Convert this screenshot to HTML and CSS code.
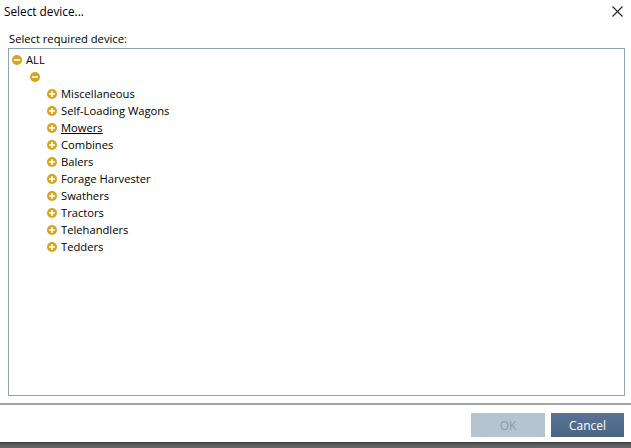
FILE: index.html
```html
<!DOCTYPE html>
<html>
<head>
<meta charset="utf-8">
<link rel="stylesheet" href="styles.css">
</head>
<body>
<div class="dialog">
  <div class="titlebar">
    <span class="title">Select device...</span>
    <svg class="close" width="11" height="11" viewBox="0 0 11 11"><path d="M0.5 0.5 L10.5 10.5 M10.5 0.5 L0.5 10.5" stroke="#222" stroke-width="1.1" fill="none"/></svg>
  </div>
  <div class="label">Select required device:</div>
  <div class="tree">
    <div class="row lvl0"><svg class="ico" viewBox="0 0 10 10"><circle cx="5" cy="5" r="5" fill="#d9a31c"/><rect x="2" y="4.2" width="6" height="1.6" fill="#fff"/></svg><span>ALL</span></div>
    <div class="row lvl1"><svg class="ico" viewBox="0 0 10 10"><circle cx="5" cy="5" r="5" fill="#d9a31c"/><rect x="2" y="4.2" width="6" height="1.6" fill="#fff"/></svg><span></span></div>
    <div class="row lvl2"><svg class="ico" viewBox="0 0 10 10"><circle cx="5" cy="5" r="5" fill="#d9a31c"/><rect x="2" y="4.2" width="6" height="1.6" fill="#fff"/><rect x="4.2" y="2" width="1.6" height="6" fill="#fff"/></svg><span>Miscellaneous</span></div>
    <div class="row lvl2"><svg class="ico" viewBox="0 0 10 10"><circle cx="5" cy="5" r="5" fill="#d9a31c"/><rect x="2" y="4.2" width="6" height="1.6" fill="#fff"/><rect x="4.2" y="2" width="1.6" height="6" fill="#fff"/></svg><span>Self-Loading Wagons</span></div>
    <div class="row lvl2"><svg class="ico" viewBox="0 0 10 10"><circle cx="5" cy="5" r="5" fill="#d9a31c"/><rect x="2" y="4.2" width="6" height="1.6" fill="#fff"/><rect x="4.2" y="2" width="1.6" height="6" fill="#fff"/></svg><span class="u">Mowers</span></div>
    <div class="row lvl2"><svg class="ico" viewBox="0 0 10 10"><circle cx="5" cy="5" r="5" fill="#d9a31c"/><rect x="2" y="4.2" width="6" height="1.6" fill="#fff"/><rect x="4.2" y="2" width="1.6" height="6" fill="#fff"/></svg><span>Combines</span></div>
    <div class="row lvl2"><svg class="ico" viewBox="0 0 10 10"><circle cx="5" cy="5" r="5" fill="#d9a31c"/><rect x="2" y="4.2" width="6" height="1.6" fill="#fff"/><rect x="4.2" y="2" width="1.6" height="6" fill="#fff"/></svg><span>Balers</span></div>
    <div class="row lvl2"><svg class="ico" viewBox="0 0 10 10"><circle cx="5" cy="5" r="5" fill="#d9a31c"/><rect x="2" y="4.2" width="6" height="1.6" fill="#fff"/><rect x="4.2" y="2" width="1.6" height="6" fill="#fff"/></svg><span>Forage Harvester</span></div>
    <div class="row lvl2"><svg class="ico" viewBox="0 0 10 10"><circle cx="5" cy="5" r="5" fill="#d9a31c"/><rect x="2" y="4.2" width="6" height="1.6" fill="#fff"/><rect x="4.2" y="2" width="1.6" height="6" fill="#fff"/></svg><span>Swathers</span></div>
    <div class="row lvl2"><svg class="ico" viewBox="0 0 10 10"><circle cx="5" cy="5" r="5" fill="#d9a31c"/><rect x="2" y="4.2" width="6" height="1.6" fill="#fff"/><rect x="4.2" y="2" width="1.6" height="6" fill="#fff"/></svg><span>Tractors</span></div>
    <div class="row lvl2"><svg class="ico" viewBox="0 0 10 10"><circle cx="5" cy="5" r="5" fill="#d9a31c"/><rect x="2" y="4.2" width="6" height="1.6" fill="#fff"/><rect x="4.2" y="2" width="1.6" height="6" fill="#fff"/></svg><span>Telehandlers</span></div>
    <div class="row lvl2"><svg class="ico" viewBox="0 0 10 10"><circle cx="5" cy="5" r="5" fill="#d9a31c"/><rect x="2" y="4.2" width="6" height="1.6" fill="#fff"/><rect x="4.2" y="2" width="1.6" height="6" fill="#fff"/></svg><span>Tedders</span></div>
  </div>
  <div class="footer">
    <div class="btn ok">OK</div>
    <div class="btn cancel">Cancel</div>
  </div>
  <div class="bottombar"></div>
</div>
</body>
</html>
```

FILE: styles.css
```css
* { box-sizing: border-box; }
html, body { margin: 0; padding: 0; }
body {
  width: 631px;
  height: 448px;
  overflow: hidden;
  background: #fff;
  font-family: "Open Sans", "Noto Sans", sans-serif;
  font-size: 11.2px;
  color: #000;
}
.dialog {
  display: flex;
  flex-direction: column;
  height: 448px;
}
.titlebar {
  height: 24px;
  display: flex;
  align-items: center;
  justify-content: space-between;
  padding: 0 8px 2px 4px;
}
.title { font-size: 11.8px; }
.close { display: block; margin-top: 1px; }
.label {
  height: 24px;
  padding: 7px 0 0 9px;
}
.tree {
  margin: 0 6px 0 8px;
  height: 348px;
  border: 1px solid #8da3b3;
  padding-top: 2px;
}
.row {
  height: 17px;
  display: flex;
  align-items: center;
  gap: 4px;
}
.lvl0 { padding-left: 3px; }
.lvl1 { padding-left: 21px; }
.lvl2 { padding-left: 38px; }
.ico { width: 10px; height: 10px; flex: none; }
.u { text-decoration: underline; }
.footer {
  margin-top: 7px;
  border-top: 2px solid #a3a3a3;
  height: 39px;
  display: flex;
  justify-content: flex-end;
  align-items: flex-start;
  gap: 6px;
  padding: 8px 7px 0 0;
}
.btn {
  height: 24px;
  display: flex;
  align-items: center;
  justify-content: center;
  font-size: 12px;
}
.ok {
  width: 74px;
  background: #b6c4d0;
  color: #8c9aa6;
}
.cancel {
  width: 73px;
  background: linear-gradient(#587394, #4b6585);
  color: #fff;
}
.bottombar {
  flex: 1;
  background: linear-gradient(#3a3a3a, #5a5a5a 40%, #6a6a6a);
}
```
